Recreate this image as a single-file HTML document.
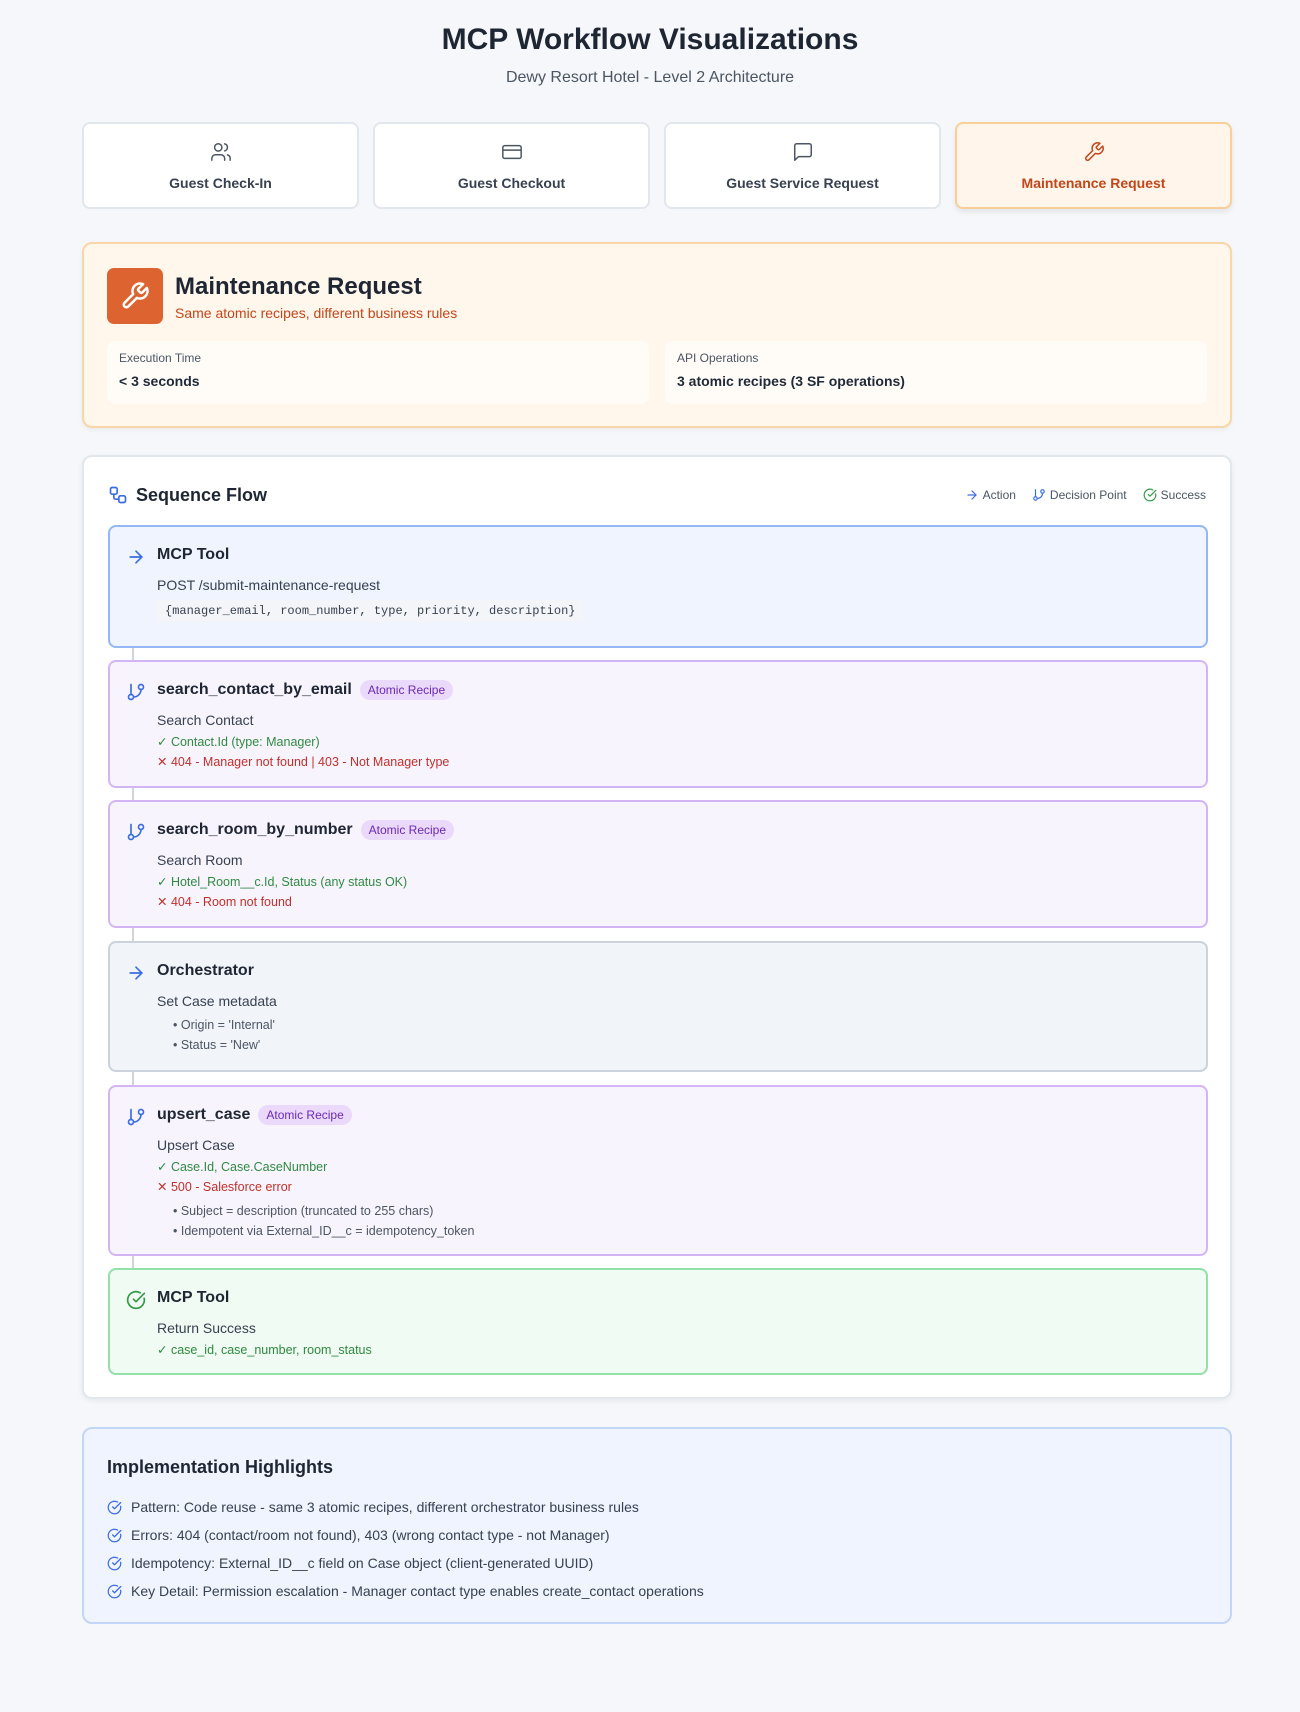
<!DOCTYPE html>
<html><head><meta charset="utf-8"><style>
*{box-sizing:border-box;margin:0;padding:0}
body{width:1300px;height:1712px;background:#f5f7fa;font-family:"Liberation Sans",sans-serif;color:#1f2937;position:relative;overflow:hidden}
.abs{position:absolute}
h1{position:absolute;top:22px;left:0;width:1300px;text-align:center;font-size:30px;font-weight:700;color:#1e2533;line-height:36px}
.sub{position:absolute;top:68px;left:0;width:1300px;text-align:center;font-size:16px;color:#4b5563;line-height:20px}
.tab{position:absolute;top:122px;width:277px;height:87px;background:#fff;border:2px solid #e2e6ed;border-radius:8px;text-align:center}
.tab svg{position:absolute;left:126px;top:17px}
.tab .l{position:absolute;top:50px;left:0;width:100%;font-size:14px;font-weight:700;color:#374151;line-height:18px}
.tab.act{background:#fff5ea;border-color:#f8cf98;box-shadow:0 3px 6px rgba(0,0,0,.08)}
.tab.act .l{color:#c2461a}
.hdr{position:absolute;left:82px;top:242px;width:1150px;height:186px;background:#fff6ec;border:2px solid #f9d6a8;border-radius:10px;box-shadow:0 2px 5px rgba(0,0,0,.05)}
.stat{position:absolute;top:97px;width:542px;height:63px;background:#fffcf8;border-radius:8px;padding-left:12px}
.stat .a{position:absolute;top:10px;left:12px;font-size:12px;color:#4b5563}
.stat .b{position:absolute;top:32px;left:12px;font-size:14px;font-weight:700;color:#1f2937}
.seq{position:absolute;left:82px;top:455px;width:1150px;height:944px;background:#fff;border:2px solid #e2e6ed;border-radius:10px;box-shadow:0 2px 6px rgba(0,0,0,.06)}
.step{position:absolute;left:24px;width:1100px;border:2px solid;border-radius:8px;padding:16px 0 0 47px}
.step .ic{position:absolute;left:16px;top:20px}
.t{font-size:16px;font-weight:700;color:#1e2533;line-height:24px;height:24px;display:flex;align-items:center}
.badge{display:inline-block;margin-left:8px;background:#ead9fb;color:#6b29b5;font-size:12px;font-weight:400;padding:0 8px;border-radius:10px;line-height:20px}
.lb{font-size:14px;color:#374151;line-height:24px;margin-top:6px}
.g{font-size:12.5px;color:#2f8a3f;line-height:20px}
.r{font-size:12.5px;color:#c0302a;line-height:20px}
.bl{font-size:12.5px;color:#4b5563;line-height:20px;padding-left:16px}
.code{font-family:"Liberation Mono",monospace;font-size:12px;color:#374151;background:#f3f5f8;display:inline-block;padding:2px 8px;margin-top:3px;line-height:18px}
.blue{background:#eff4fe;border-color:#93b8f5}
.pur{background:#f8f4fe;border-color:#d3b5f5}
.gry{background:#f1f4f8;border-color:#cbd2db}
.grn{background:#f0fbf3;border-color:#93e0a8}
.vl{position:absolute;left:48px;width:2px;background:#d1d5db}
.hl{position:absolute;left:82px;top:1427px;width:1150px;height:197px;background:#f0f4fe;border:2px solid #c3d6f7;border-radius:10px}
.hi{position:absolute;left:23px;font-size:14px;color:#374151;line-height:18px;display:flex;align-items:center}
.hi svg{margin-right:9px}
</style></head><body>
<h1>MCP Workflow Visualizations</h1>
<div class="sub">Dewy Resort Hotel - Level 2 Architecture</div>

<div class="tab" style="left:82px"><svg width="22" height="22" viewBox="0 0 24 24" fill="none" stroke="#4b5563" stroke-width="1.6" stroke-linecap="round" stroke-linejoin="round"><path d="M16 21v-2a4 4 0 0 0-4-4H6a4 4 0 0 0-4 4v2"/><circle cx="9" cy="7" r="4"/><path d="M22 21v-2a4 4 0 0 0-3-3.870"/><path d="M16 3.13a4 4 0 0 1 0 7.75"/></svg><div class="l">Guest Check-In</div></div>
<div class="tab" style="left:373px"><svg width="22" height="22" viewBox="0 0 24 24" fill="none" stroke="#4b5563" stroke-width="1.6" stroke-linecap="round" stroke-linejoin="round"><rect x="2" y="5" width="20" height="14" rx="2"/><path d="M2 10h20"/></svg><div class="l">Guest Checkout</div></div>
<div class="tab" style="left:664px"><svg width="22" height="22" viewBox="0 0 24 24" fill="none" stroke="#4b5563" stroke-width="1.6" stroke-linecap="round" stroke-linejoin="round"><path d="M21 15a2 2 0 0 1-2 2H7l-4 4V5a2 2 0 0 1 2-2h14a2 2 0 0 1 2 2z"/></svg><div class="l">Guest Service Request</div></div>
<div class="tab act" style="left:955px"><svg width="22" height="22" viewBox="0 0 24 24" fill="none" stroke="#c2461a" stroke-width="1.6" stroke-linecap="round" stroke-linejoin="round"><path d="M14.7 6.3a1 1 0 0 0 0 1.4l1.6 1.6a1 1 0 0 0 1.4 0l3.77-3.77a6 6 0 0 1-7.94 7.94l-6.91 6.91a2.12 2.12 0 0 1-3-3l6.91-6.91a6 6 0 0 1 7.94-7.94l-3.76 3.76z"/></svg><div class="l">Maintenance Request</div></div>

<div class="hdr">
 <div class="abs" style="left:23px;top:24px;width:56px;height:56px;background:#dd6430;border-radius:7px"><svg style="position:absolute;left:13px;top:13px" width="30" height="30" viewBox="0 0 24 24" fill="none" stroke="#fff" stroke-width="2" stroke-linecap="round" stroke-linejoin="round"><path d="M14.7 6.3a1 1 0 0 0 0 1.4l1.6 1.6a1 1 0 0 0 1.4 0l3.77-3.77a6 6 0 0 1-7.94 7.94l-6.91 6.91a2.12 2.12 0 0 1-3-3l6.91-6.91a6 6 0 0 1 7.94-7.940l-3.76 3.76z"/></svg></div>
 <div class="abs" style="left:91px;top:28px;font-size:24px;font-weight:700;color:#1e2533;line-height:30px">Maintenance Request</div>
 <div class="abs" style="left:91px;top:60px;font-size:14px;color:#c2461a;line-height:18px">Same atomic recipes, different business rules</div>
 <div class="stat" style="left:23px"><div class="a">Execution Time</div><div class="b">&lt; 3 seconds</div></div>
 <div class="stat" style="left:581px"><div class="a">API Operations</div><div class="b">3 atomic recipes (3 SF operations)</div></div>
</div>

<div class="seq">
 <svg class="abs" style="left:24px;top:28px" width="20" height="20" viewBox="0 0 24 24" fill="none" stroke="#3b6ee0" stroke-width="2" stroke-linecap="round" stroke-linejoin="round"><rect x="3" y="3" width="8" height="8" rx="2"/><path d="M7 11v4a2 2 0 0 0 2 2h4"/><rect x="13" y="13" width="8" height="8" rx="2"/></svg>
 <div class="abs" style="left:52px;top:26px;font-size:18px;font-weight:700;color:#1e2533;line-height:24px">Sequence Flow</div>
 <div class="abs" style="right:24px;top:30px;font-size:12px;color:#4b5563;display:flex;align-items:center;line-height:16px">
  <svg width="14" height="14" viewBox="0 0 24 24" fill="none" stroke="#3b6ee0" stroke-width="2" stroke-linecap="round" stroke-linejoin="round"><path d="M5 12h14"/><path d="m12 5 7 7-7 7"/></svg><span style="margin:0 16px 0 4px">Action</span>
  <svg width="14" height="14" viewBox="0 0 24 24" fill="none" stroke="#3b6ee0" stroke-width="2" stroke-linecap="round" stroke-linejoin="round"><path d="M6 3v12"/><circle cx="18" cy="6" r="3"/><circle cx="6" cy="18" r="3"/><path d="M18 9a9 9 0 0 1-9 9"/></svg><span style="margin:0 16px 0 4px">Decision Point</span>
  <svg width="14" height="14" viewBox="0 0 24 24" fill="none" stroke="#2f9a45" stroke-width="2" stroke-linecap="round" stroke-linejoin="round"><path d="M21.8 10A10 10 0 1 1 17 3.34"/><path d="m9 11 3 3L22 4"/></svg><span style="margin-left:4px">Success</span>
 </div>

 <div class="vl" style="top:189px;height:16px"></div>
 <div class="vl" style="top:329px;height:16px"></div>
 <div class="vl" style="top:469px;height:16px"></div>
 <div class="vl" style="top:613px;height:16px"></div>
 <div class="vl" style="top:797px;height:16px"></div>

 <div class="step blue" style="top:68px;height:123px">
  <svg class="ic" width="20" height="20" viewBox="0 0 24 24" fill="none" stroke="#3b6ee0" stroke-width="2" stroke-linecap="round" stroke-linejoin="round"><path d="M5 12h14"/><path d="m12 5 7 7-7 7"/></svg>
  <div class="t">MCP Tool</div>
  <div class="lb">POST /submit-maintenance-request</div>
  <div class="code">{manager_email, room_number, type, priority, description}</div>
 </div>
 <div class="step pur" style="top:203px;height:128px">
  <svg class="ic" width="20" height="20" viewBox="0 0 24 24" fill="none" stroke="#3b6ee0" stroke-width="2" stroke-linecap="round" stroke-linejoin="round"><path d="M6 3v12"/><circle cx="18" cy="6" r="3"/><circle cx="6" cy="18" r="3"/><path d="M18 9a9 9 0 0 1-9 9"/></svg>
  <div class="t">search_contact_by_email<span class="badge">Atomic Recipe</span></div>
  <div class="lb">Search Contact</div>
  <div class="g">✓ Contact.Id (type: Manager)</div>
  <div class="r">✕ 404 - Manager not found | 403 - Not Manager type</div>
 </div>
 <div class="step pur" style="top:343px;height:128px">
  <svg class="ic" width="20" height="20" viewBox="0 0 24 24" fill="none" stroke="#3b6ee0" stroke-width="2" stroke-linecap="round" stroke-linejoin="round"><path d="M6 3v12"/><circle cx="18" cy="6" r="3"/><circle cx="6" cy="18" r="3"/><path d="M18 9a9 9 0 0 1-9 9"/></svg>
  <div class="t">search_room_by_number<span class="badge">Atomic Recipe</span></div>
  <div class="lb">Search Room</div>
  <div class="g">✓ Hotel_Room__c.Id, Status (any status OK)</div>
  <div class="r">✕ 404 - Room not found</div>
 </div>
 <div class="step gry" style="top:484px;height:131px">
  <svg class="ic" width="20" height="20" viewBox="0 0 24 24" fill="none" stroke="#3b6ee0" stroke-width="2" stroke-linecap="round" stroke-linejoin="round"><path d="M5 12h14"/><path d="m12 5 7 7-7 7"/></svg>
  <div class="t">Orchestrator</div>
  <div class="lb">Set Case metadata</div>
  <div class="bl" style="margin-top:2px">• Origin = 'Internal'</div>
  <div class="bl">• Status = 'New'</div>
 </div>
 <div class="step pur" style="top:628px;height:171px">
  <svg class="ic" width="20" height="20" viewBox="0 0 24 24" fill="none" stroke="#3b6ee0" stroke-width="2" stroke-linecap="round" stroke-linejoin="round"><path d="M6 3v12"/><circle cx="18" cy="6" r="3"/><circle cx="6" cy="18" r="3"/><path d="M18 9a9 9 0 0 1-9 9"/></svg>
  <div class="t">upsert_case<span class="badge">Atomic Recipe</span></div>
  <div class="lb">Upsert Case</div>
  <div class="g">✓ Case.Id, Case.CaseNumber</div>
  <div class="r">✕ 500 - Salesforce error</div>
  <div class="bl" style="margin-top:4px">• Subject = description (truncated to 255 chars)</div>
  <div class="bl">• Idempotent via External_ID__c = idempotency_token</div>
 </div>
 <div class="step grn" style="top:811px;height:107px">
  <svg class="ic" width="20" height="20" viewBox="0 0 24 24" fill="none" stroke="#2f9a45" stroke-width="2" stroke-linecap="round" stroke-linejoin="round"><path d="M21.8 10A10 10 0 1 1 17 3.34"/><path d="m9 11 3 3L22 4"/></svg>
  <div class="t">MCP Tool</div>
  <div class="lb">Return Success</div>
  <div class="g">✓ case_id, case_number, room_status</div>
 </div>
</div>

<div class="hl">
 <div class="abs" style="left:23px;top:26px;font-size:18px;font-weight:700;color:#1e2533;line-height:24px">Implementation Highlights</div>
 <div class="hi" style="top:69px"><svg width="15" height="15" viewBox="0 0 24 24" fill="none" stroke="#3b6ee0" stroke-width="2" stroke-linecap="round" stroke-linejoin="round"><path d="M21.8 10A10 10 0 1 1 17 3.34"/><path d="m9 11 3 3L22 4"/></svg>Pattern: Code reuse - same 3 atomic recipes, different orchestrator business rules</div>
 <div class="hi" style="top:97px"><svg width="15" height="15" viewBox="0 0 24 24" fill="none" stroke="#3b6ee0" stroke-width="2" stroke-linecap="round" stroke-linejoin="round"><path d="M21.8 10A10 10 0 1 1 17 3.34"/><path d="m9 11 3 3L22 4"/></svg>Errors: 404 (contact/room not found), 403 (wrong contact type - not Manager)</div>
 <div class="hi" style="top:125px"><svg width="15" height="15" viewBox="0 0 24 24" fill="none" stroke="#3b6ee0" stroke-width="2" stroke-linecap="round" stroke-linejoin="round"><path d="M21.8 10A10 10 0 1 1 17 3.34"/><path d="m9 11 3 3L22 4"/></svg>Idempotency: External_ID__c field on Case object (client-generated UUID)</div>
 <div class="hi" style="top:153px"><svg width="15" height="15" viewBox="0 0 24 24" fill="none" stroke="#3b6ee0" stroke-width="2" stroke-linecap="round" stroke-linejoin="round"><path d="M21.8 10A10 10 0 1 1 17 3.34"/><path d="m9 11 3 3L22 4"/></svg>Key Detail: Permission escalation - Manager contact type enables create_contact operations</div>
</div>
</body></html>
